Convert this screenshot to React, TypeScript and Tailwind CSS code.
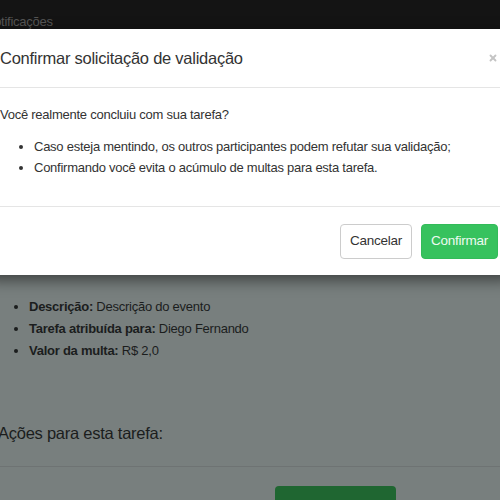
import { X } from 'lucide-react';

const font = { fontFamily: '"Liberation Sans Narrow", "Liberation Sans", Arial, sans-serif' };

const details = [
  { label: 'Descrição:', value: 'Descrição do evento' },
  { label: 'Tarefa atribuída para:', value: 'Diego Fernando' },
  { label: 'Valor da multa:', value: 'R$ 2,0' },
];

function PageBehind() {
  return (
    <div className="flex h-full flex-col bg-[#787f7e] text-[13px] tracking-[-0.25px] text-[#1b1d1d]">
      <nav className="h-[48px] shrink-0 bg-[#141414]">
        <span className="ml-[-15px] mt-[12px] inline-block text-[13px] leading-[20px] text-[#555]">Notificações</span>
      </nav>

      <ul className="mt-[248px] list-disc pl-[29px] leading-[22px] marker:text-[#1b1d1d]">
        {details.map((d) => (
          <li key={d.label}>
            <b>{d.label}</b> {d.value}
          </li>
        ))}
      </ul>

      <h4 className="ml-[-2px] mt-[58px] text-[16.5px] leading-[26px]">Ações para esta tarefa:</h4>
      <hr className="mt-[20px] border-t border-[#6e7373]" />
      <div className="mt-[19px] flex items-start gap-[20px]">
        <span className="mt-[9px] w-[255px] text-[#7a1d1d]">Após a data limite, esta tarefa será validada.</span>
        <div className="h-[34px] w-[121px] rounded-[4px] bg-[#1f6631]" />
      </div>
    </div>
  );
}

function ConfirmModal() {
  return (
    <div className="absolute left-[-15px] right-[-13px] top-[29px] rounded-[6px] bg-white tracking-[-0.25px] text-[#333] shadow-[0_5px_15px_rgba(0,0,0,0.5)]">
      <div className="flex items-start justify-between border-b border-[#e5e5e5] p-[15px]">
        <h4 className="text-[16.5px] leading-[28px]">Confirmar solicitação de validação</h4>
        <X className="mt-[9px] h-[10px] w-[10px] text-[#c4c4c4]" strokeWidth={4.5} />
      </div>
      <div className="px-[15px] pb-[28px] pt-[17px] text-[13px] leading-[20px]">
        <p className="mb-[11px]">Você realmente concluiu com sua tarefa?</p>
        <ul className="list-disc pl-[34px] leading-[21px]">
          <li>Caso esteja mentindo, os outros participantes podem refutar sua validação;</li>
          <li>Confirmando você evita o acúmulo de multas para esta tarefa.</li>
        </ul>
      </div>
      <div className="flex justify-end gap-[9px] border-t border-[#e5e5e5] px-[15px] pb-[16px] pt-[17px] text-[13.5px]">
        <button className="h-[35px] rounded-[4px] border border-[#ccc] bg-white px-[9px] text-[#333]">Cancelar</button>
        <button className="h-[35px] rounded-[4px] border border-[#33bb59] bg-[#37c25e] px-[9px] text-[#eefaf1]">Confirmar</button>
      </div>
    </div>
  );
}

export default function App() {
  return (
    <div className="relative h-[500px] w-[500px] overflow-hidden" style={font}>
      <PageBehind />
      <ConfirmModal />
    </div>
  );
}
